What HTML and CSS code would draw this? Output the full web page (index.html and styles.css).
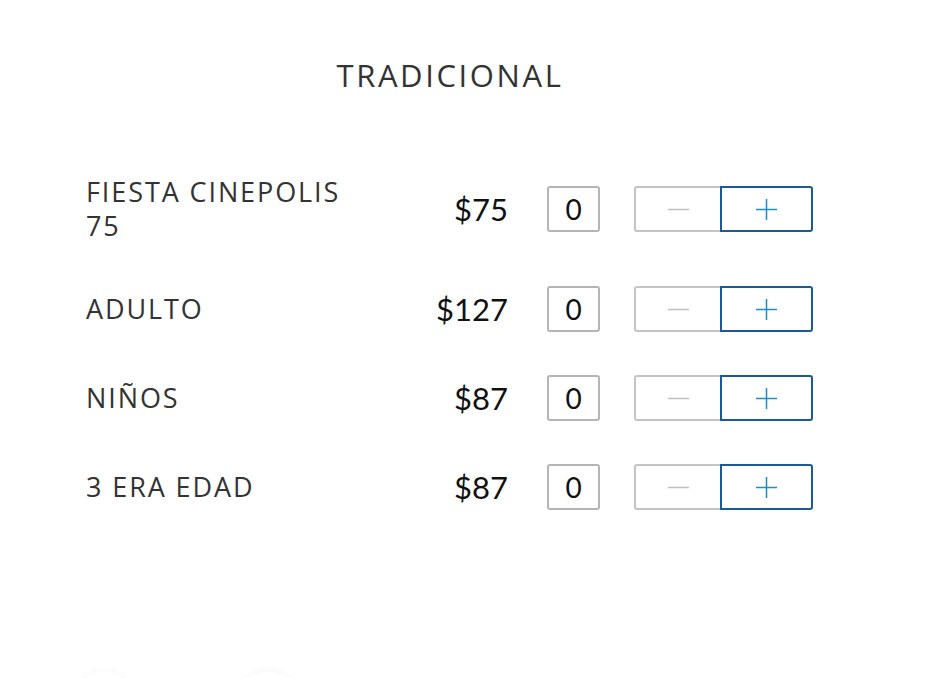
FILE: index.html
```html
<!DOCTYPE html>
<html lang="es">
<head>
<meta charset="utf-8">
<title>Boletos</title>
<link rel="stylesheet" href="styles.css">
</head>
<body>
<main class="card">
  <h1 class="title">TRADICIONAL</h1>
  <section class="tickets">
    <div class="row">
      <div class="label">FIESTA CINEPOLIS<br>75</div>
      <div class="price">$75</div>
      <div class="qty">0</div>
      <div class="stepper">
        <button class="btn minus" type="button"><svg viewBox="0 0 24 24"><path d="M1 12H23"/></svg></button>
        <button class="btn plus" type="button"><svg viewBox="0 0 24 24"><path d="M1 12H23M12 1V23"/></svg></button>
      </div>
    </div>
    <div class="row">
      <div class="label">ADULTO</div>
      <div class="price">$127</div>
      <div class="qty">0</div>
      <div class="stepper">
        <button class="btn minus" type="button"><svg viewBox="0 0 24 24"><path d="M1 12H23"/></svg></button>
        <button class="btn plus" type="button"><svg viewBox="0 0 24 24"><path d="M1 12H23M12 1V23"/></svg></button>
      </div>
    </div>
    <div class="row">
      <div class="label">NIÑOS</div>
      <div class="price">$87</div>
      <div class="qty">0</div>
      <div class="stepper">
        <button class="btn minus" type="button"><svg viewBox="0 0 24 24"><path d="M1 12H23"/></svg></button>
        <button class="btn plus" type="button"><svg viewBox="0 0 24 24"><path d="M1 12H23M12 1V23"/></svg></button>
      </div>
    </div>
    <div class="row">
      <div class="label">3 ERA EDAD</div>
      <div class="price">$87</div>
      <div class="qty">0</div>
      <div class="stepper">
        <button class="btn minus" type="button"><svg viewBox="0 0 24 24"><path d="M1 12H23"/></svg></button>
        <button class="btn plus" type="button"><svg viewBox="0 0 24 24"><path d="M1 12H23M12 1V23"/></svg></button>
      </div>
    </div>
  </section>
  <div class="bubbles">
    <span class="bubble"></span>
    <span class="bubble"></span>
  </div>
</main>
</body>
</html>
```

FILE: styles.css
```css
* { box-sizing: border-box; }
html, body { margin: 0; padding: 0; background: #fff; }
body { width: 946px; height: 678px; overflow: hidden; }

.card {
  width: 900px;
  height: 678px;
  overflow: hidden;
  display: flex;
  flex-direction: column;
}

.title {
  margin: 55px 0 0;
  text-align: center;
  font-family: "Open Sans", sans-serif;
  font-weight: 400;
  font-size: 31px;
  line-height: 40px;
  letter-spacing: 2.6px;
  color: #333;
}

.tickets {
  margin-top: 80px;
  padding-left: 86px;
  display: flex;
  flex-direction: column;
  gap: 43px;
}

.row {
  display: flex;
  align-items: center;
}

.label {
  width: 280px;
  font-family: "Open Sans", sans-serif;
  font-size: 27px;
  line-height: 34px;
  letter-spacing: 1.9px;
  color: #333;
}

.price {
  width: 142px;
  text-align: right;
  font-family: Lato, sans-serif;
  font-size: 31px;
  color: #111;
}

.qty {
  margin-left: 39px;
  width: 53px;
  height: 46px;
  border: 2px solid #b5b5b5;
  border-radius: 3px;
  display: flex;
  align-items: center;
  justify-content: center;
  font-family: Lato, sans-serif;
  font-size: 28px;
  color: #111;
}

.stepper {
  margin-left: 34px;
  display: flex;
  height: 46px;
}

.btn {
  margin: 0;
  padding: 0;
  background: #fff;
  display: flex;
  align-items: center;
  justify-content: center;
  cursor: pointer;
}
.btn svg { width: 23px; height: 23px; fill: none; stroke-width: 1.6; }

.minus {
  width: 86px;
  border: 2px solid #c4c4c4;
  border-right: none;
  border-radius: 3px 0 0 3px;
}
.minus svg { stroke: #c0c0c0; }

.plus {
  width: 93px;
  border: 2px solid #1a5a95;
  border-radius: 0 3px 3px 0;
}
.plus svg { stroke: #1c8fc7; }

.bubbles {
  margin-top: 162px;
  padding-left: 72px;
  display: flex;
  gap: 100px;
}
.bubble {
  flex: none;
  width: 64px;
  height: 64px;
  border-radius: 50%;
  background: #fff;
  box-shadow: 0 -1px 10px rgba(0, 0, 0, 0.035);
}
```
